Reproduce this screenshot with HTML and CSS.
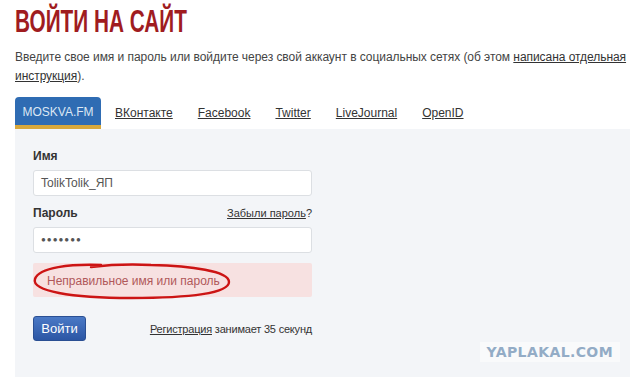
FILE: index.html
```html
<!DOCTYPE html>
<html lang="ru">
<head>
<meta charset="utf-8">
<link rel="stylesheet" href="styles.css">
</head>
<body>
<div class="page">
  <h1 class="title"><span class="title-text">ВОЙТИ НА САЙТ</span></h1>
  <p class="intro">Введите свое имя и пароль или войдите через свой аккаунт в социальных сетях (об этом <a href="#">написана отдельная</a><br><a href="#">инструкция</a>).</p>
  <div class="tabs">
    <span class="tab active">MOSKVA.FM</span>
    <a class="tab" href="#">ВКонтакте</a>
    <a class="tab" href="#">Facebook</a>
    <a class="tab" href="#">Twitter</a>
    <a class="tab" href="#">LiveJournal</a>
    <a class="tab" href="#">OpenID</a>
  </div>
  <div class="panel">
    <form class="form">
      <div class="label-row"><span class="label">Имя</span></div>
      <div class="input">TolikTolik_ЯП</div>
      <div class="label-row"><span class="label">Пароль</span><span class="forgot"><a href="#">Забыли пароль</a>?</span></div>
      <div class="input dots">●●●●●●●</div>
      <div class="error">
        <span>Неправильное имя или пароль</span>
        <svg class="circle" width="204" height="40" viewBox="0 0 204 40">
          <path d="M70 4 C 40 3, 8 6, 4 18 C 0 30, 40 37, 100 37 C 160 37, 198 32, 198 21 C 198 10, 160 5, 120 4 C 100 3, 85 3, 60 6" fill="none" stroke="#cc1414" stroke-width="2.4" stroke-linecap="round"/>
        </svg>
      </div>
      <div class="actions">
        <button class="btn" type="button">Войти</button>
        <span class="reg"><a href="#">Регистрация</a> занимает 35 секунд</span>
      </div>
    </form>
    <div class="watermark">YAPLAKAL.COM</div>
  </div>
</div>
</body>
</html>
```
FILE: styles.css
```css
html, body { margin: 0; padding: 0; background: #fff; }
body { font-family: "Liberation Sans", Arial, sans-serif; color: #333; }
.page { width: 615px; padding: 0 10px 0 15px; }
.title {
  margin: 0; padding-top: 5px;
  font-family: "Liberation Sans", Arial, sans-serif;
  font-weight: bold; font-size: 31px; line-height: 34px;
  color: #a01c1f;
}
.title-text { display: inline-block; transform: scaleX(0.67); transform-origin: 0 50%; white-space: nowrap; }
.intro {
  margin: 9px 0 0; font-size: 12px; line-height: 19px; color: #444;
  letter-spacing: -0.05px; white-space: nowrap;
}
a { color: #333; text-decoration: underline; }
.tabs {
  display: flex; align-items: center; margin-top: 11px; height: 32px;
}
.tab { font-size: 12px; margin-right: 25px; color: #333; }
.tab.active {
  box-sizing: border-box; height: 32px; width: 86px; margin-right: 14px;
  background: #2f6cb3; color: #dce7f4; border-radius: 4px 4px 0 0;
  border-bottom: 4px solid #d8a83c;
  display: flex; align-items: center; justify-content: center; padding-top: 2px;
}
.panel {
  background: #f3f5f8; height: 248px; position: relative; padding: 20px 18px 0;
  box-sizing: border-box;
}
.form { width: 279px; display: flex; flex-direction: column; }
.label-row { display: flex; justify-content: space-between; align-items: baseline; height: 21px; }
.label { font-weight: bold; font-size: 12px; color: #333; }
.forgot { font-size: 11px; color: #333; }
.input {
  box-sizing: border-box; height: 26px; background: #fff;
  border: 1px solid #dcdfe3; border-radius: 3px;
  font-size: 12px; color: #555; padding: 0 7px; line-height: 24px;
  margin-bottom: 10px;
}
.dots { font-size: 8px; letter-spacing: 1px; color: #555; }
.error {
  position: relative; box-sizing: border-box; height: 34px; background: #f7e1e1;
  border-radius: 2px; font-size: 12px; color: #b0585a; padding: 0 14px; line-height: 36px;
}
.circle { position: absolute; left: -2px; top: -2px; }
.actions { display: flex; justify-content: space-between; align-items: center; margin-top: 19px; }
.btn {
  width: 53px; height: 25px; border: 1px solid #2a4f93; border-radius: 3px;
  background: linear-gradient(#4a79c6, #2c56a4); color: #fff;
  font-family: "Liberation Sans", Arial, sans-serif; font-size: 13px; padding: 0;
}
.reg { font-size: 11px; color: #333; letter-spacing: -0.2px; }
.watermark {
  position: absolute; right: 10px; bottom: 15px; background: #f9fafb;
  padding: 2px 7px; color: #93acc6; font-family: "DejaVu Sans", sans-serif;
  font-weight: bold; font-size: 14px; letter-spacing: 0.4px;
}
```
